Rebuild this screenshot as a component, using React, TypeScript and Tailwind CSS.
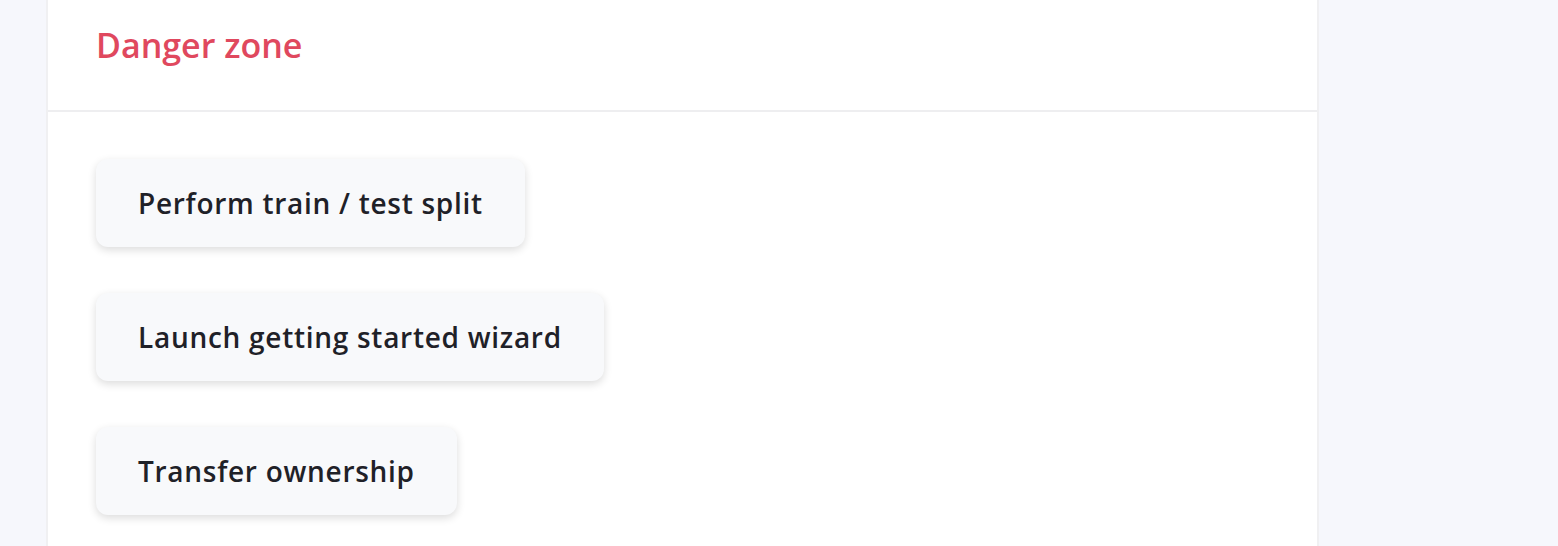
import React from 'react';

const actions = ['Perform train / test split', 'Launch getting started wizard', 'Transfer ownership'];

const App = () => {
  return <div className="w-full h-[546px] overflow-hidden bg-[#f6f7fc] flex" style={{ fontFamily: '"Open Sans", sans-serif' }}>
      <div className="w-[46px] shrink-0" />
      {/* Card */}
      <div className="w-[1273px] shrink-0 bg-white border-x-2 border-[#f0f0f2]">
        <div className="h-[112px] border-b-2 border-[#eeeef0] px-[48px] pt-[21px]">
          <h2 className="text-[34px] font-semibold text-[#e0485e] leading-[48px]">Danger zone</h2>
        </div>
        <div className="px-[48px] pt-[47px] flex flex-col items-start gap-[46px]">
          {actions.map(a => <button key={a} className="h-[88px] px-[42px] rounded-[12px] bg-[#f8f9fb] text-[28px] font-semibold text-[#1f2128] tracking-[0.72px] shadow-[0_3px_8px_rgba(0,0,0,0.14)]">
              {a}
            </button>)}
        </div>
      </div>
      <div className="flex-1" />
    </div>;
};
export default App;
